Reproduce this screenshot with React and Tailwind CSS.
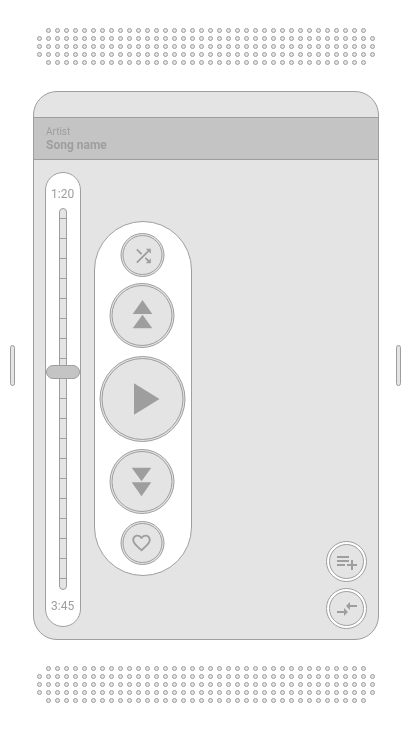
function Speaker() {
  return (
    <div className="flex w-[338px] flex-col gap-[3px]">
      {[36, 38, 38, 38, 36].map((count, row) => (
        <div key={row} className="flex justify-center gap-1">
          {Array.from({ length: count }, (_, i) => (
            <span key={i} className="size-[5px] shrink-0 rounded-full border border-[#9e9e9e] bg-[#e4e4e4]" />
          ))}
        </div>
      ))}
    </div>
  );
}

function RoundButton({ label, size, ring = "p-px bg-[#e4e4e4]", children }) {
  return (
    <button aria-label={label} className={`flex shrink-0 rounded-full border border-[#9e9e9e] ${size} ${ring}`}>
      <span className="flex size-full items-center justify-center rounded-full border border-[#9e9e9e] bg-[#e4e4e4]">
        {children}
      </span>
    </button>
  );
}

function Icon({ d, className }) {
  return (
    <svg viewBox="0 0 24 24" fill="#9e9e9e" className={`shrink-0 ${className}`}>
      <path d={d} />
    </svg>
  );
}

const SHUFFLE = "M10.59 9.17L5.41 4 4 5.41l5.17 5.17 1.42-1.41zM14.5 4l2.04 2.04L4 18.59 5.41 20 17.96 7.46 20 9.5V4h-5.5zm.33 9.41l-1.41 1.41 3.13 3.13L14.5 20H20v-5.5l-2.04 2.04-3.13-3.13z";
const HEART = "M16.5 3c-1.74 0-3.41.81-4.5 2.09C10.91 3.81 9.24 3 7.5 3 4.42 3 2 5.42 2 8.5c0 3.78 3.4 6.86 8.55 11.54L12 21.35l1.45-1.32C18.6 15.36 22 12.28 22 8.5 22 5.42 19.58 3 16.5 3zm-4.4 15.55l-.1.1-.1-.1C7.14 14.24 4 11.39 4 8.5 4 6.5 5.5 5 7.5 5c1.54 0 3.04.99 3.57 2.36h1.87C13.46 5.99 14.96 5 16.5 5c2 0 3.5 1.5 3.5 3.5 0 2.89-3.14 5.74-7.9 10.05z";
const ADD_TO_LIST = "M14 10H2v2h12v-2zm0-4H2v2h12V6zm4 8v-4h-2v4h-4v2h4v4h2v-4h4v-2h-4zM2 16h8v-2H2v2z";
const ARROWS = "M9.01 14H2v2h7.01v3L13 15l-3.99-4v3zm5.98-1v-3H22V8h-7.01V5L11 9l3.99 4z";

function Progress() {
  return (
    <div className="flex h-[455px] w-9 shrink-0 flex-col items-center rounded-full border border-[#9e9e9e] bg-white pt-[13px] text-[12px] leading-4 text-[#9e9e9e]">
      <span className="will-change-transform">1:20</span>
      <div className="relative mt-[6px] flex h-[382px] w-2 shrink-0 flex-col gap-[19px] rounded-full border border-[#9e9e9e] bg-[#e4e4e4] pt-[9px]">
        {Array.from({ length: 19 }, (_, i) => (
          <span key={i} className="h-px w-full shrink-0 bg-[#9e9e9e]" />
        ))}
        <span className="absolute top-[156px] -left-[14px] h-[14px] w-[34px] rounded-full border border-[#9e9e9e] bg-[#c4c4c4]" />
      </div>
      <span className="mt-2 will-change-transform">3:45</span>
    </div>
  );
}

function Controls() {
  return (
    <div className="mt-[49px] ml-[13px] flex h-[355px] w-[98px] shrink-0 flex-col items-center rounded-full border border-[#9e9e9e] bg-white pt-[11px] pr-px">
      <RoundButton label="Shuffle" size="translate-x-[0.5px] size-11">
        <Icon d={SHUFFLE} className="mt-px ml-px size-[22px]" />
      </RoundButton>
      <RoundButton label="Previous" size="-translate-x-[0.5px] mt-[6px] size-[65px]">
        <svg viewBox="0 0 20 30" fill="#9e9e9e" className="-mt-[3px] ml-px h-[30px] w-5">
          <path d="M10 1 19.8 15H.2zM10 15.7 19.8 29.3H.2z" />
        </svg>
      </RoundButton>
      <RoundButton label="Play" size="translate-x-[0.5px] mt-2 size-[86px]">
        <svg viewBox="0 0 26 32" fill="#9e9e9e" className="ml-[7px] h-8 w-[26px]">
          <path d="M.5.2 26 16 .5 31.8z" />
        </svg>
      </RoundButton>
      <RoundButton label="Next" size="-translate-x-[0.5px] mt-[7px] size-[65px]">
        <svg viewBox="0 0 20 30" fill="#9e9e9e" className="h-[30px] w-5">
          <path d="M.2.7h19.6L10 14.3zM.2 15.3h19.6L10 29.3z" />
        </svg>
      </RoundButton>
      <RoundButton label="Like" size="translate-x-[0.5px] mt-[7px] size-11">
        <Icon d={HEART} className="mr-[2px] size-[22px]" />
      </RoundButton>
    </div>
  );
}

export default function App() {
  return (
    <div className="flex h-[731px] w-[411px] flex-col items-center overflow-hidden bg-white pt-7 pl-px font-[Roboto,sans-serif]">
      <Speaker />
      <div className="mt-[26px] flex w-full items-center justify-between pr-[10px] pl-[9px]">
        <span className="-mt-px h-[41px] w-[5px] rounded-full border border-[#9e9e9e] bg-[#e4e4e4]" />
        <main className="flex h-[549px] w-[346px] flex-col overflow-hidden rounded-[24px] border border-[#9e9e9e] bg-[#e4e4e4] pt-[25px]">
          <header className="-mx-px flex h-[43px] shrink-0 flex-col border border-[#9e9e9e] bg-[#c4c4c4] pt-[7px] pl-[12.5px] text-[#9e9e9e]">
            <span className="text-[10px] leading-[13px] will-change-transform">Artist</span>
            <span className="text-[12px] leading-[14px] font-bold will-change-transform">Song name</span>
          </header>
          <div className="flex pt-3 pl-[11px]">
            <Progress />
            <Controls />
            <div className="mt-[369px] ml-auto mr-[11px] flex flex-col gap-[6px]">
              <RoundButton label="Add to playlist" size="size-[41px]" ring="p-[2px] bg-white">
                <Icon d={ADD_TO_LIST} className="ml-px size-6" />
              </RoundButton>
              <RoundButton label="Swap" size="size-[41px]" ring="p-[2px] bg-white">
                <Icon d={ARROWS} className="ml-px size-6" />
              </RoundButton>
            </div>
          </div>
        </main>
        <span className="-mt-px h-[41px] w-[5px] rounded-full border border-[#9e9e9e] bg-[#e4e4e4]" />
      </div>
      <div className="mt-[26px]">
        <Speaker />
      </div>
    </div>
  );
}
